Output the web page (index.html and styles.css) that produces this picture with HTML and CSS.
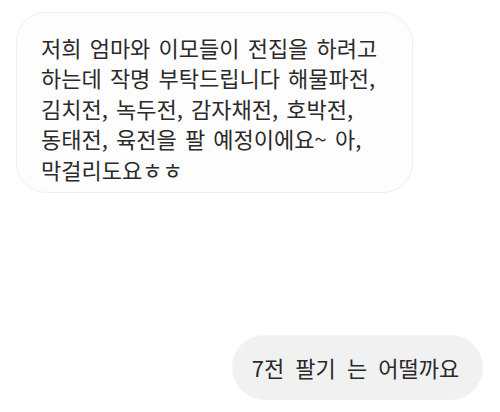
FILE: index.html
```html
<!DOCTYPE html>
<html lang="ko">
<head>
  <meta charset="UTF-8" />
  <meta name="viewport" content="width=device-width, initial-scale=1.0" />
  <title>채팅</title>
  <link rel="stylesheet" href="styles.css">
</head>
<body>
  <div class="chat">
    <div class="bubble received">
      저희 엄마와 이모들이 전집을 하려고<br>
      하는데 작명 부탁드립니다 해물파전,<br>
      김치전, 녹두전, 감자채전, 호박전,<br>
      동태전, 육전을 팔 예정이에요~ 아,<br>
      막걸리도요ㅎㅎ
    </div>
    <div class="bubble sent">7전 팔기 는 어떨까요</div>
  </div>
</body>
</html>
```

FILE: styles.css
```css
* {
  margin: 0;
  padding: 0;
  box-sizing: border-box;
}

body {
  font-family: "Noto Sans CJK KR", "Noto Sans", sans-serif;
  background: #ffffff;
  color: #2a2a2a;
  width: 500px;
  height: 412px;
  overflow: hidden;
}

.chat {
  display: flex;
  flex-direction: column;
  padding: 12px 17px 0 16px;
}

.bubble {
  font-size: 22px;
  line-height: 30.4px;
  word-spacing: 2px;
}

.received {
  align-self: flex-start;
  width: 397px;
  height: 181px;
  padding: 19px 6px 0 24px;
  background: #fdfdfd;
  border: 1px solid #efefef;
  border-radius: 30px;
}

.sent {
  align-self: flex-end;
  margin-top: 142px;
  height: 65px;
  width: 251px;
  display: flex;
  align-items: center;
  justify-content: center;
  padding-right: 4px;
  background: #f1f1f1;
  border-radius: 33px;
  word-spacing: 5px;
}
```
